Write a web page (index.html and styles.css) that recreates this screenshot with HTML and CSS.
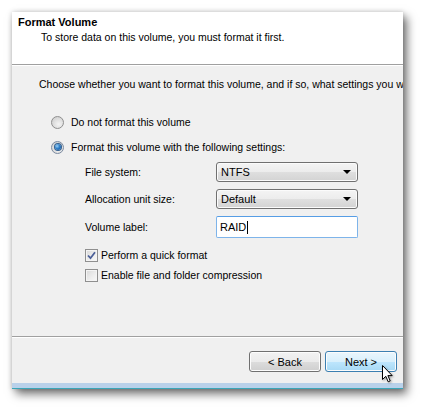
FILE: index.html
```html
<!DOCTYPE html>
<html>
<head>
<meta charset="utf-8">
<title>Format Volume</title>
<link rel="stylesheet" href="styles.css">
</head>
<body>
<div class="stage">
  <div class="window">
    <div class="header">
      <div class="title">Format Volume</div>
      <div class="subtitle">To store data on this volume, you must format it first.</div>
    </div>
    <div class="content">
      <div class="intro">Choose whether you want to format this volume, and if so, what settings you want to use.</div>
      <div class="radios">
        <div class="radio-row"><span class="radio"></span><span>Do not format this volume</span></div>
        <div class="radio-row"><span class="radio checked"><span class="dot"></span></span><span>Format this volume with the following settings:</span></div>
      </div>
      <div class="fields">
        <div class="field"><span class="label">File system:</span><span class="combo"><span>NTFS</span><span class="arrow"></span></span></div>
        <div class="field"><span class="label">Allocation unit size:</span><span class="combo"><span>Default</span><span class="arrow"></span></span></div>
        <div class="field"><span class="label">Volume label:</span><span class="textbox"><span>RAID</span><span class="caret"></span></span></div>
      </div>
      <div class="checks">
        <div class="check-row"><span class="checkbox"><svg width="9" height="9" viewBox="0 0 9 9"><path d="M1 4.5 L3.5 7.2 L8 1.2" fill="none" stroke="#4b5f98" stroke-width="1.8"/></svg></span><span>Perform a quick format</span></div>
        <div class="check-row"><span class="checkbox"></span><span>Enable file and folder compression</span></div>
      </div>
    </div>
    <div class="footer">
      <span class="btn">&lt; Back</span>
      <span class="btn hot">Next &gt;</span>
    </div>
    <div class="strip"></div>
  </div>
  <svg class="cursor" width="14" height="20" viewBox="0 0 14 20">
    <path d="M1.5 1.5 L1.5 15.5 L4.8 12.3 L7.2 17.8 L9.2 16.9 L6.9 11.6 L11.2 11.6 Z" fill="#fff" stroke="#000" stroke-width="1" stroke-linejoin="miter"/>
  </svg>
</div>
</body>
</html>
```
FILE: styles.css
```css
html, body {
  margin: 0;
  padding: 0;
  background: #ffffff;
}
body {
  font-family: "Liberation Sans", Arial, sans-serif;
  font-size: 10.5px;
  color: #000;
}
.stage {
  position: relative;
  padding: 12px 0 0 12px;
  width: 411px;
  height: 398px;
}
.window {
  width: 391px;
  height: 377px;
  display: flex;
  flex-direction: column;
  overflow: hidden;
  background: #f0f0f0;
  box-shadow: 4px 5px 9px rgba(0,0,0,0.55), 0 0 5px rgba(0,0,0,0.18);
}
.header {
  height: 53px;
  background: #fff;
  padding: 3px 6px 0;
  box-sizing: border-box;
  border-bottom: 1px solid #a0a0a0;
  flex: none;
}
.title {
  font-weight: bold;
  font-size: 11px;
  line-height: 14px;
}
.subtitle {
  padding-left: 23px;
  line-height: 14px;
  margin-top: 1px;
}
.content {
  flex: 1;
  padding: 12px 0 0 27px;
  white-space: nowrap;
  display: flex;
  flex-direction: column;
  border-bottom: 1px solid #a0a0a0;
  box-shadow: inset 0 1px 0 #fff;
}
.intro {
  line-height: 14px;
}
.radios {
  margin-top: 24px;
  padding-left: 12px;
  display: flex;
  flex-direction: column;
  gap: 11px;
}
.radio-row {
  display: flex;
  align-items: center;
  gap: 7px;
  height: 14px;
}
.radio {
  width: 11px;
  height: 11px;
  border-radius: 50%;
  border: 1px solid #8f8f8f;
  background: radial-gradient(circle at 60% 65%, #f4f4f4 0%, #dcdcdc 55%, #c8c8c8 100%);
  display: flex;
  align-items: center;
  justify-content: center;
  flex: none;
}
.radio.checked {
  border-color: #7b8aa0;
}
.dot {
  width: 6px;
  height: 6px;
  border-radius: 50%;
  background: radial-gradient(circle at 35% 35%, #9ad0f5 0%, #2f7fc8 45%, #104f94 100%);
  box-shadow: 0 0 0 1px #335f8f;
}
.fields {
  margin-top: 8px;
  padding-left: 46px;
  display: flex;
  flex-direction: column;
  gap: 7px;
}
.field {
  display: flex;
  align-items: center;
  height: 20px;
}
.field:last-child {
  height: 22px;
}
.label {
  width: 131px;
  flex: none;
}
.combo {
  width: 142px;
  height: 20px;
  box-sizing: border-box;
  border: 1px solid #707070;
  border-radius: 3px;
  background: linear-gradient(#f4f4f4 0%, #ececec 50%, #dfdfdf 51%, #d3d3d3 100%);
  box-shadow: inset 0 0 0 1px #fbfbfb;
  display: flex;
  align-items: center;
  justify-content: space-between;
  padding: 0 6px 0 4px;
  font-size: 11px;
}
.arrow {
  width: 0;
  height: 0;
  border-left: 4px solid transparent;
  border-right: 4px solid transparent;
  border-top: 4px solid #000;
}
.textbox {
  width: 142px;
  height: 22px;
  box-sizing: border-box;
  border: 1px solid #7eb4ea;
  border-top-color: #569de5;
  border-radius: 2px;
  background: #fff;
  display: flex;
  align-items: center;
  padding-left: 3px;
  font-size: 11px;
}
.caret {
  width: 1px;
  height: 13px;
  background: #000;
  margin-left: 1px;
}
.checks {
  margin-top: 10px;
  padding-left: 46px;
  display: flex;
  flex-direction: column;
  gap: 6px;
}
.check-row {
  display: flex;
  align-items: center;
  gap: 3px;
  height: 14px;
}
.checkbox {
  width: 11px;
  height: 11px;
  border: 1px solid #8f8f8f;
  background: linear-gradient(135deg, #d8d8d8 0%, #eeeeee 60%, #f8f8f8 100%);
  box-shadow: inset 0 0 0 1px #f4f4f4;
  display: flex;
  align-items: center;
  justify-content: center;
  flex: none;
}
.footer {
  height: 46px;
  flex: none;
  box-sizing: border-box;
  padding: 14px 6px 0 0;
  display: flex;
  justify-content: flex-end;
  align-items: flex-start;
  gap: 4px;
  box-shadow: inset 0 1px 0 #fff;
}
.btn {
  width: 72px;
  height: 21px;
  box-sizing: border-box;
  border: 1px solid #707070;
  border-radius: 3px;
  background: linear-gradient(#f2f2f2 0%, #ebebeb 50%, #dddddd 51%, #cfcfcf 100%);
  box-shadow: inset 0 0 0 1px #fcfcfc;
  display: flex;
  align-items: center;
  justify-content: center;
  font-size: 11px;
  color: #000;
}
.btn.hot {
  border-color: #3c7fb1;
  background: linear-gradient(#eaf6fd 0%, #d9f0fc 50%, #bee6fd 51%, #a7d9f5 100%);
}
.strip {
  height: 6px;
  flex: none;
  box-sizing: border-box;
  background: #b9d1ea;
  border-bottom: 1px solid #3aa6b8;
}
.cursor {
  position: absolute;
  left: 381px;
  top: 364px;
  filter: drop-shadow(1px 1px 1px rgba(0,0,0,0.35));
}
```
